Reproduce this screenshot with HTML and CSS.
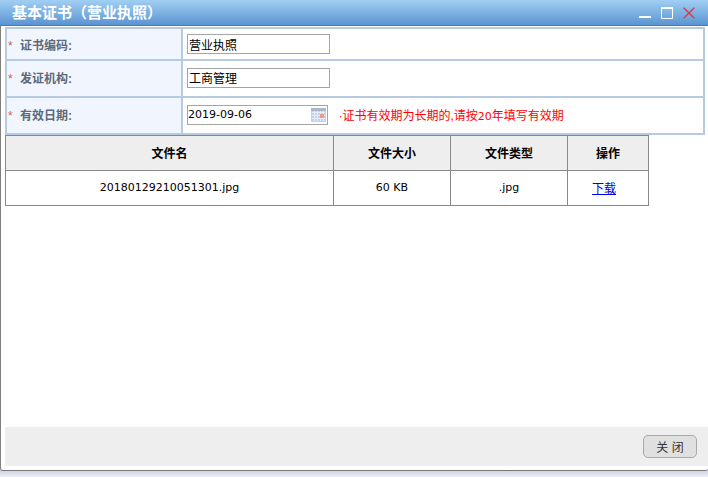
FILE: index.html
```html
<!DOCTYPE html>
<html lang="zh">
<head>
<meta charset="utf-8">
<title>基本证书（营业执照）</title>
<link rel="stylesheet" href="styles.css">
</head>
<body>
<div class="window">
  <header class="titlebar">
    <h1 class="title">基本证书（营业执照）</h1>
    <div class="controls">
      <svg class="ctl" width="12" height="12" viewBox="0 0 12 12"><rect x="0" y="9" width="12" height="2" fill="#fff"/></svg>
      <svg class="ctl" width="12" height="12" viewBox="0 0 12 12"><path d="M.5.5h11v11H.5z" fill="none" stroke="#fff"/><rect x="0" y="0" width="12" height="2" fill="#fff"/></svg>
      <svg class="ctl" width="12" height="12" viewBox="0 0 12 12"><path d="M.7.7l10.6 10.6M11.3.7L.7 11.3" stroke="#d0404e" stroke-width="1.500" fill="none"/></svg>
    </div>
  </header>
  <main class="content">
    <table class="form">
      <tr class="row-a">
        <th class="label"><span class="req">*</span>证书编码:</th>
        <td class="field"><input class="input" value="营业执照" readonly></td>
      </tr>
      <tr class="row-b">
        <th class="label"><span class="req">*</span>发证机构:</th>
        <td class="field"><input class="input" value="工商管理" readonly></td>
      </tr>
      <tr class="row-b">
        <th class="label"><span class="req">*</span>有效日期:</th>
        <td class="field">
          <div class="date-line">
            <div class="date">
              <span class="latin">2019-09-06</span>
              <svg class="cal" width="15" height="14" viewBox="0 0 15 14">
                <rect x="0" y="0" width="15" height="14" fill="#c3d3ea"/>
                <rect x="0" y="0" width="15" height="3" fill="#a9b7c9"/>
                <path d="M1 4.500h13M1 7.500h13M1 10.500h13M3.500 3v10M6.500 3v10M9.500 3v10M12.500 3v10" stroke="#e6edf8" stroke-width="1" fill="none"/>
                <rect x="9" y="6" width="4" height="4" fill="#ea9c86"/>
              </svg>
            </div>
            <span class="hint"><span class="latin">·</span>证书有效期为长期的,请按<span class="latin">20</span>年填写有效期</span>
          </div>
        </td>
      </tr>
    </table>
    <table class="files">
      <colgroup>
        <col class="c-name"><col class="c-size"><col class="c-type"><col class="c-op">
      </colgroup>
      <tr class="head">
        <th>文件名</th><th>文件大小</th><th>文件类型</th><th>操作</th>
      </tr>
      <tr class="body-row">
        <td class="latin">20180129210051301.jpg</td><td class="latin">60 KB</td><td class="latin">.jpg</td><td><a class="dl" href="#">下载</a></td>
      </tr>
    </table>
  </main>
  <footer class="footer">
    <button class="close" type="button">关 闭</button>
  </footer>
</div>
</body>
</html>
```
FILE: styles.css
```css
html, body {
  margin: 0;
  padding: 0;
}
body {
  width: 708px;
  height: 477px;
  overflow: hidden;
  background: linear-gradient(to bottom, #d0d1e2 470px, #eeeef6 477px);
  font-family: "Liberation Sans", "Noto Sans CJK SC", sans-serif;
  font-size: 12px;
  color: #000;
}
.latin {
  font-family: "DejaVu Sans", "Noto Sans CJK SC", sans-serif;
  font-size: 11px;
}
.window {
  box-sizing: border-box;
  height: 471px;
  background: #fff;
  display: flex;
  flex-direction: column;
  border-left: 1px solid #808080;
  border-bottom: 1px solid #777;
  border-radius: 0 0 3px 3px;
}
.titlebar {
  flex: none;
  box-sizing: border-box;
  height: 26px;
  margin-left: -1px;
  padding: 0 13px 0 12px;
  display: flex;
  align-items: center;
  justify-content: space-between;
  background: linear-gradient(#a1cff3, #5a95d2);
  border-bottom: 1px solid #3f7db9;
}
.title {
  margin: 0;
  font-size: 15px;
  font-weight: bold;
  line-height: 22px;
  color: #fff;
}
.controls {
  display: flex;
  gap: 10px;
}
.ctl {
  display: block;
}
.content {
  flex: 1;
  padding: 1px 3px 0 4px;
}
.form {
  width: 700px;
  table-layout: fixed;
  border-collapse: collapse;
  border: 2px solid #b6cbe2;
}
.form th, .form td {
  border: 2px solid #b6cbe2;
  padding: 0;
}
.row-a { height: 32px; }
.row-b { height: 37px; }
.row-b .label, .row-b .field {
  padding-bottom: 2px;
}
.label {
  width: 176px;
  box-sizing: border-box;
  background: #f1f6fe;
  text-align: left;
  font-size: 12px;
  font-weight: bold;
  color: #5c6a7a;
  white-space: nowrap;
}
.req {
  display: inline-block;
  width: 12px;
  padding-left: 1px;
  color: #e2594f;
  font-weight: normal;
}
.form .field {
  padding-left: 4px;
  background: #fff;
}
.input {
  display: block;
  box-sizing: border-box;
  width: 143px;
  height: 20px;
  margin: 0;
  padding: 0 1px;
  border: 1px solid #a5a5a5;
  background: #fff;
  font-family: "Liberation Sans", "Noto Sans CJK SC", sans-serif;
  font-size: 12px;
  color: #000;
  outline: none;
}
.date-line {
  display: flex;
  align-items: center;
}
.date {
  box-sizing: border-box;
  width: 141px;
  height: 20px;
  border: 1px solid #a5a5a5;
  display: flex;
  align-items: center;
  justify-content: space-between;
  padding: 0 1px 0 0;
}
.cal {
  display: block;
}
.hint {
  margin-left: 11px;
  color: #f00;
  font-size: 12px;
}
.files {
  table-layout: fixed;
  width: 644px;
  border-collapse: collapse;
  margin-top: 0;
}
.c-name { width: 328px; }
.c-size { width: 117px; }
.c-type { width: 117px; }
.c-op { width: 81px; }
.files th, .files td {
  border: 1px solid #888;
  padding: 0 0 1px;
  text-align: center;
  font-size: 12px;
}
.files td.latin {
  font-size: 11px;
}
.files td:last-child {
  padding-right: 8px;
}
.head {
  height: 35px;
  background: #eee;
}
.head th {
  font-weight: bold;
}
.body-row {
  height: 35px;
}
.dl {
  color: #00e;
}
.footer {
  flex: none;
  box-sizing: border-box;
  height: 39px;
  margin: 0 0 4px 4px;
  padding: 8px 11px 0 0;
  background: #eee;
  display: flex;
  justify-content: flex-end;
  align-items: flex-start;
}
.close {
  box-sizing: border-box;
  width: 54px;
  height: 23px;
  padding: 0;
  border: 1px solid #a9a9a9;
  border-radius: 5px;
  background: #e0e0e0;
  font-family: "Liberation Sans", "Noto Sans CJK SC", sans-serif;
  font-size: 12px;
  color: #333;
}
```
